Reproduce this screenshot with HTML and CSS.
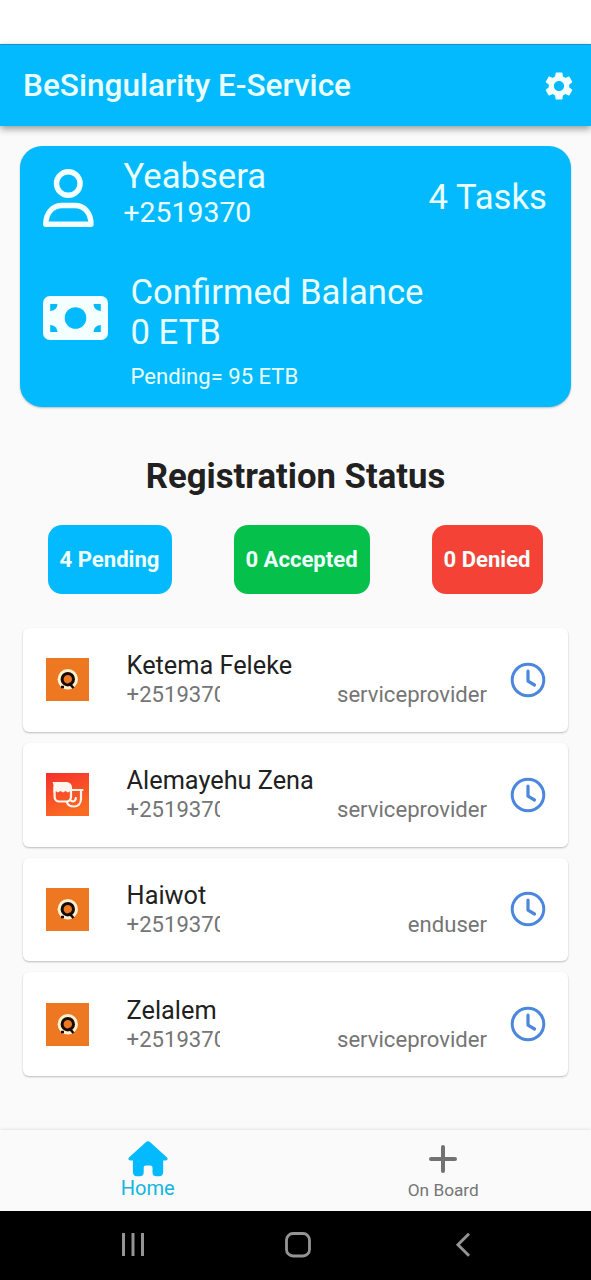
FILE: index.html
```html
<!DOCTYPE html>
<html lang="en">
<head>
<meta charset="utf-8">
<title>BeSingularity E-Service</title>
<link rel="stylesheet" href="styles.css">
</head>
<body>
<svg class="defs" width="0" height="0" aria-hidden="true">
  <defs>
    <linearGradient id="sunset" x1="0" y1="0" x2="0.4" y2="1"><stop offset="0" stop-color="#f52f2c"/><stop offset="1" stop-color="#fa6a22"/></linearGradient>
    <symbol id="clock" viewBox="0 0 36 36">
      <g fill="none" stroke="#4b87dd" stroke-linecap="round" stroke-linejoin="round">
        <circle cx="18" cy="18" r="15.8" stroke-width="3"/>
        <path d="M18 9v10.200l6.500 3.800" stroke-width="3.200"/>
      </g>
    </symbol>
    <symbol id="q-logo" viewBox="0 0 43 43">
      <rect width="43" height="43" fill="#ee7722"/>
      <circle cx="21.800" cy="21.300" r="10.200" fill="#fff0cf"/>
      <circle cx="21.800" cy="21.200" r="5.700" fill="#ee7722" stroke="#160b08" stroke-width="3"/>
      <path d="M23 25l4.500 5M15 29h3" stroke="#160b08" stroke-width="2.600"/>
    </symbol>
    <symbol id="faces-logo" viewBox="0 0 43 43">
      <rect width="43" height="43" fill="url(#sunset)"/>
      <path d="M6.500 9H20c3.500 0 6 2.300 6 5.500v4.500l-1.500-1-2.500 1.500-2.500-1.500-2.500 1.500-2.500-1.500-2.500 1.500-2.500-1.500L7.500 20v-7c0-2-.5-3-1-4z" fill="#fff5ef"/>
      <g fill="none" stroke="#fff5ef" stroke-width="2.200" stroke-linecap="round" stroke-linejoin="round">
        <path d="M8.600 14v9.500c0 3.500 1.700 5 5 5h6.400c3.300 0 5-1.500 5-5V15"/>
        <path d="M26 17h10.500M35 17.500v8.500c0 4.500-3 7.500-7 7.500s-6.500-2-7.200-4.500M29.800 25c.2 2.500-2 4-4.500 3"/>
      </g>
    </symbol>
  </defs>
</svg>
<div class="screen">
  <div class="status-bar"></div>
  <header class="app-bar">
    <h1 class="app-title">BeSingularity E-Service</h1>
    <svg class="gear" viewBox="0 0 24 24"><path fill="#f4ffff" d="M19.140 12.940c.040-.300.060-.610.060-.940 0-.320-.020-.640-.070-.940l2.030-1.580c.180-.140.230-.410.120-.610l-1.920-3.320c-.120-.220-.370-.290-.590-.220l-2.390.960c-.500-.380-1.030-.700-1.620-.940l-.360-2.540c-.040-.240-.240-.410-.480-.410h-3.840c-.240 0-.430.170-.470.410l-.360 2.540c-.590.240-1.130.570-1.620.940l-2.390-.960c-.220-.080-.470 0-.590.220L2.740 8.870c-.120.210-.080.470.120.610l2.030 1.580c-.050.300-.090.630-.090.940s.020.640.070.940l-2.030 1.580c-.180.140-.230.410-.120.610l1.920 3.320c.120.220.370.290.590.220l2.390-.960c.500.380 1.030.700 1.620.940l.360 2.540c.050.240.240.410.480.410h3.840c.240 0 .440-.170.470-.410l.360-2.540c.590-.240 1.130-.560 1.620-.940l2.390.960c.220.080.470 0 .590-.220l1.920-3.320c.120-.220.070-.470-.120-.610l-2.010-1.580zM12 15.600c-1.980 0-3.600-1.620-3.600-3.600s1.620-3.600 3.600-3.600 3.600 1.620 3.600 3.600-1.620 3.600-3.600 3.600z"/></svg>
  </header>
  <main class="content">
    <section class="summary">
      <div class="profile">
        <svg class="user-icon" viewBox="0 0 51 59"><g fill="none" stroke="#f4ffff" stroke-width="5.400" stroke-linejoin="round"><circle cx="25.300" cy="14.500" r="11.800"/><path d="M2.800 55.300C2.800 43.500 10 36.500 19 36.500h13c9 0 16 7 16 18.800z"/></g></svg>
        <div class="identity">
          <div class="big name">Yeabsera</div>
          <div class="phone">+2519370</div>
        </div>
        <div class="big tasks">4 Tasks</div>
      </div>
      <div class="balance">
        <svg class="cash-icon" viewBox="0 0 65 44"><rect width="65" height="44" rx="7" fill="#f4ffff"/><g fill="#03baff"><circle cx="32.500" cy="22" r="10.800"/><path d="M7.200 8h7.300a7.300 7 0 0 1-7.300 7zM57.800 8h-7.300a7.300 7 0 0 0 7.300 7zM7.200 36h7.300a7.300 7 0 0 0-7.300-7zM57.800 36h-7.300a7.300 7 0 0 1 7.300-7z"/></g></svg>
        <div class="amounts">
          <div class="big">Confirmed Balance</div>
          <div class="big amount">0 ETB</div>
          <div class="pending">Pending= 95 ETB</div>
        </div>
      </div>
    </section>
    <h2 class="heading">Registration Status</h2>
    <div class="pills">
      <div class="pill pill-pending"><span>4 Pending</span></div>
      <div class="pill pill-accepted"><span>0 Accepted</span></div>
      <div class="pill pill-denied"><span>0 Denied</span></div>
    </div>
    <div class="list">
      <article class="row"><svg class="logo"><use href="#q-logo"/></svg><div class="details"><div class="person">Ketema Feleke</div><div class="meta"><span class="number">+2519370</span><span class="role">serviceprovider</span></div></div><svg class="clock"><use href="#clock"/></svg></article>
      <article class="row"><svg class="logo"><use href="#faces-logo"/></svg><div class="details"><div class="person">Alemayehu Zena</div><div class="meta"><span class="number">+2519370</span><span class="role">serviceprovider</span></div></div><svg class="clock"><use href="#clock"/></svg></article>
      <article class="row"><svg class="logo"><use href="#q-logo"/></svg><div class="details"><div class="person">Haiwot</div><div class="meta"><span class="number">+2519370</span><span class="role">enduser</span></div></div><svg class="clock"><use href="#clock"/></svg></article>
      <article class="row"><svg class="logo"><use href="#q-logo"/></svg><div class="details"><div class="person">Zelalem</div><div class="meta"><span class="number">+2519370</span><span class="role">serviceprovider</span></div></div><svg class="clock"><use href="#clock"/></svg></article>
    </div>
  </main>
  <nav class="tabs">
    <div class="tab tab-active">
      <svg class="home-icon" viewBox="0 0 40 36"><path fill="#03baff" d="M17.800 1.200c1.300-1.300 3.100-1.300 4.400 0l16.600 15c1.500 1.500.700 3.300-1.300 3.300h-2.300V31c0 2.700-1.500 4.300-4 4.300h-2.700c-2.700 0-4-1.300-4-4v-4.500c0-1.500-.8-2.300-2.200-2.300H18c-1.500 0-2.300.8-2.300 2.300v4.500c0 2.700-1.300 4-4 4H9c-2.600 0-4.100-1.600-4.100-4.300V19.500H2.500c-2 0-2.800-1.800-1.300-3.300z"/></svg>
      <span>Home</span>
    </div>
    <div class="tab">
      <svg class="plus-icon" viewBox="0 0 28 28"><path d="M14 2v24M2 14h24" stroke="#727272" stroke-width="4" stroke-linecap="round"/></svg>
      <span>On Board</span>
    </div>
  </nav>
  <div class="system-bar">
    <svg class="sys-icon" viewBox="0 0 26 26"><path d="M3.500 1v23M13 1v23M22.500 1v23" stroke="#949494" stroke-width="3"/></svg>
    <svg class="sys-icon" viewBox="0 0 26 26"><rect x="1.500" y="1.500" width="23" height="22.500" rx="6.500" fill="none" stroke="#949494" stroke-width="2.800"/></svg>
    <svg class="sys-icon" viewBox="0 0 26 26"><path d="M19 1.800L8 12.800l11 11" fill="none" stroke="#949494" stroke-width="3"/></svg>
  </div>
</div>
</body>
</html>
```

FILE: styles.css
```css
* { box-sizing: border-box; }
body { margin: 0; font-family: Roboto, "Liberation Sans", sans-serif; color: #212121; }
h1, h2 { margin: 0; }
svg { display: block; flex: none; }
.defs { position: absolute; }
.screen { width: 591px; height: 1280px; display: flex; flex-direction: column; background: #fafafa; overflow: hidden; }
.status-bar { height: 44px; background: #fff; flex: none; }
.app-bar { height: 82px; flex: none; display: flex; align-items: center; justify-content: space-between; padding: 0 15px 0 23px; background: #03baff; border-top: 1px solid #168fd0; box-shadow: 0 3px 7px rgba(0,0,0,.38); }
.app-title { font-size: 31.550px; font-weight: 500; line-height: 40px; color: #eaffff; white-space: nowrap; }
.gear { width: 34px; height: 34px; }
.content { flex: 1; display: flex; flex-direction: column; padding: 20px 20px 0; }
.summary { height: 261px; flex: none; border-radius: 22px; background: #03baff; color: #eaffff; box-shadow: 0 1px 2px rgba(0,0,0,.25); padding: 10px 24px 0 23px; }
.profile { display: flex; height: 107px; }
.user-icon { width: 51px; height: 59px; margin-top: 12.500px; }
.identity { margin-left: 29.500px; flex: 1; }
.big { font-size: 34.700px; line-height: 40px; white-space: nowrap; }
.name { line-height: 41px; }
.phone { font-size: 28.400px; line-height: 32px; }
.tasks { margin-top: 21px; }
.balance { display: flex; padding-top: 9px; }
.cash-icon { width: 65px; height: 44px; margin-top: 24px; }
.amounts { margin-left: 22.500px; }
.pending { font-size: 22.100px; line-height: 26px; margin-top: 11px; }
.heading { text-align: center; font-size: 34.700px; font-weight: 700; line-height: 42px; margin-top: 48px; }
.pills { display: flex; justify-content: space-between; padding: 0 28px; margin-top: 28px; }
.pill { height: 69px; border-radius: 14px; display: flex; align-items: center; justify-content: center; padding: 0 1px 2px 0; color: #f0ffff; font-size: 22.100px; font-weight: 700; white-space: nowrap; }
.pill-pending { width: 124px; background: #03baff; }
.pill-accepted { width: 136px; background: #05c04a; }
.pill-denied { width: 111px; background: #f44336; }
.list { display: flex; flex-direction: column; gap: 11px; padding: 0 3px; margin-top: 34px; }
.row { height: 103.800px; display: flex; background: #fff; border-radius: 6px; box-shadow: 0 1px 2px rgba(0,0,0,.25); padding: 0 22px 0 23px; align-items: center; }
.logo { width: 43px; height: 43px; }
.details { flex: 1; margin-left: 37.600px; margin-right: 23px; }
.person { font-size: 25.300px; line-height: 30px; }
.meta { display: flex; justify-content: space-between; font-size: 22.100px; line-height: 27px; color: #757575; }
.number { width: 93.400px; overflow: hidden; white-space: nowrap; }
.clock { width: 36px; height: 36px; }
.tabs { height: 81px; flex: none; display: flex; background: #fafafa; box-shadow: 0 -1px 3px rgba(0,0,0,.09); }
.tab { flex: 1; display: flex; flex-direction: column; align-items: center; font-size: 17.250px; line-height: 22px; color: #757575; }
.tab-active { font-size: 20.100px; color: #14b5df; }
.home-icon { width: 40px; height: 36px; margin: 11px 0 0; }
.plus-icon { width: 28px; height: 28px; margin: 15px 0 6px; }
.system-bar { height: 69px; flex: none; background: #000; display: grid; grid-template-columns: repeat(3, 165px); justify-content: center; justify-items: center; align-items: center; padding: 0 0 1px 5px; }
.sys-icon { height: 26px; width: 26px; }
```
